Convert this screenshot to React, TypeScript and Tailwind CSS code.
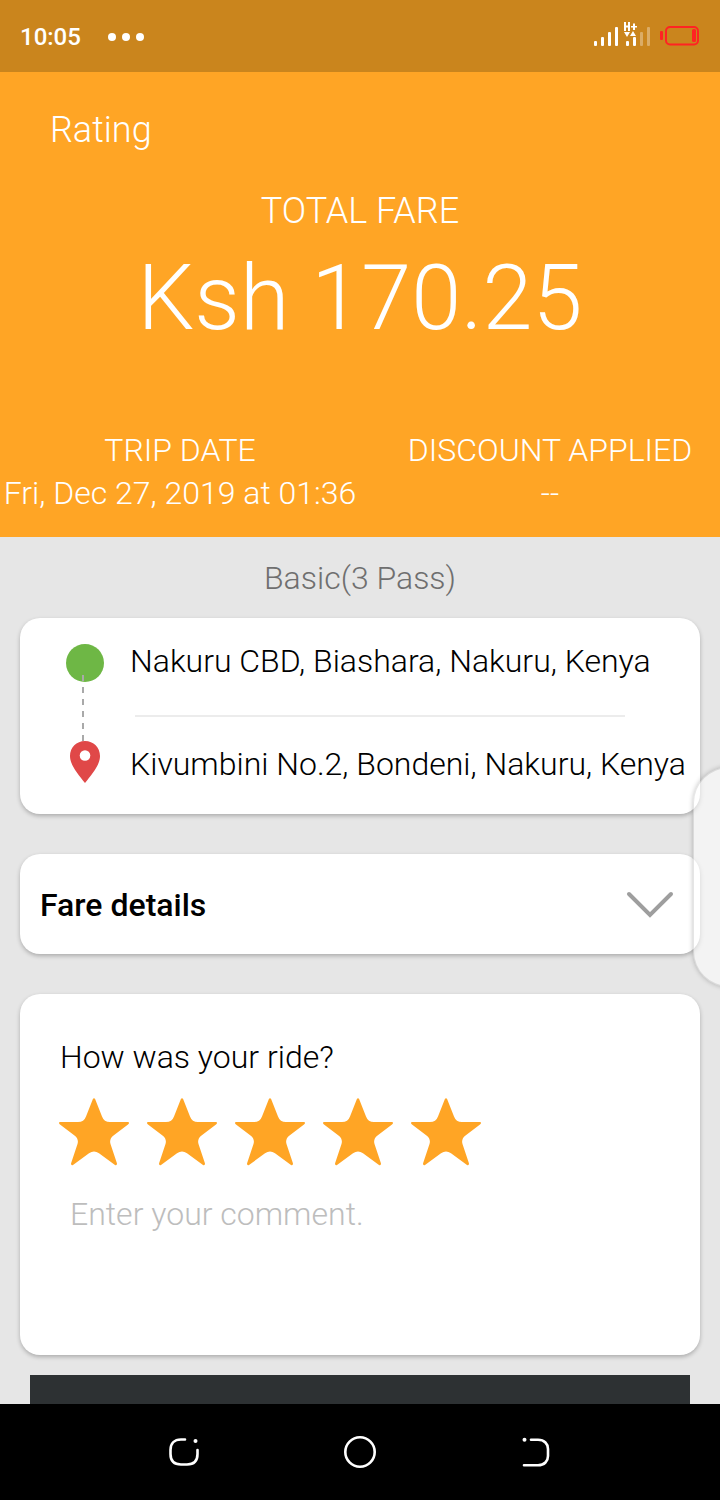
import { useState } from "react";

const STARS = [1, 2, 3, 4, 5];

function StatusBar() {
  return (
    <div className="flex h-[72px] shrink-0 items-center justify-between bg-[#ca851d] pl-5 pr-5 text-white">
      <div className="flex items-center gap-[27px] pt-0.5">
        <span className="text-2xl font-medium">10:05</span>
        <svg className="h-2 w-9" viewBox="0 0 36 8" fill="currentColor" aria-hidden="true">
          <circle cx="4" cy="4" r="4" />
          <circle cx="18" cy="4" r="4" />
          <circle cx="32" cy="4" r="4" />
        </svg>
      </div>
      <svg className="h-7 w-[107px]" viewBox="0 0 107 28" fill="none" aria-hidden="true">
        <g fill="#fff">
          <rect x="1" y="19" width="3" height="5" rx="1" />
          <rect x="8" y="15" width="3" height="9" rx="1" />
          <rect x="15" y="10" width="3" height="14" rx="1" />
          <rect x="22" y="5" width="3" height="19" rx="1" />
          <path d="M31 0h2v3.500h2V0h2v9h-2V5.500h-2V9h-2zM40 1.500h2v2.500h2v1.500h-2V8h-2V5.500h-2V4h2z" />
          <path d="M31 10h6l-3 5zM37 14h6l-3-5z" />
          <rect x="33" y="19" width="3" height="5" rx="1" />
          <rect x="40" y="15" width="3" height="9" rx="1" />
        </g>
        <g fill="#fff" opacity=".32">
          <rect x="47" y="10" width="3" height="14" rx="1" />
          <rect x="54" y="5" width="3" height="19" rx="1" />
        </g>
        <rect x="67" y="9" width="3" height="9" rx="1" fill="#ff2323" />
        <rect x="73" y="5" width="32" height="17.500" rx="4" stroke="#ff2323" strokeWidth="2" />
        <rect x="99" y="7" width="4" height="13" rx="1.500" fill="#ff2323" />
      </svg>
    </div>
  );
}

function Header() {
  return (
    <header className="bg-[#ffa525] pb-[22px] pt-9 text-center text-white">
      <h1 className="px-[50px] text-left text-4xl/[44px] font-light">Rating</h1>
      <p className="mt-[37px] text-4xl/[44px] font-light">TOTAL FARE</p>
      <p className="mt-[14px] text-[90px]/[104px] font-light">Ksh 170.25</p>
      <div className="mt-[78px] grid grid-cols-2 text-[32px]/[43px] font-light whitespace-nowrap">
        <div>
          <p>TRIP DATE</p>
          <p>Fri, Dec 27, 2019 at 01:36</p>
        </div>
        <div className="pl-5">
          <p>DISCOUNT APPLIED</p>
          <p>--</p>
        </div>
      </div>
    </header>
  );
}

function RouteCard() {
  return (
    <section className="flex h-[196px] rounded-[20px] bg-white pl-[45px] shadow-[0_2px_4px_rgba(0,0,0,0.25)]">
      <svg className="mt-[25px] h-[142px] w-10 shrink-0" viewBox="0 0 40 142" aria-hidden="true">
        <circle cx="20" cy="20" r="19" fill="#6eb745" />
        <path d="M18 32V100" stroke="#a9a9a9" strokeWidth="2" strokeDasharray="6 6" />
        <path
          d="M20 98C11.500 98 5 104.500 5 113C5 122 13 131 20 140C27 131 35 122 35 113C35 104.500 28.500 98 20 98Z"
          fill="#e04848"
        />
        <circle cx="20" cy="112.500" r="5.300" fill="#fff" />
      </svg>
      <div className="flex min-w-0 flex-1 flex-col pl-[25px] pt-[23px] text-[32px]/[40px] font-light whitespace-nowrap text-black">
        <p>Nakuru CBD, Biashara, Nakuru, Kenya</p>
        <hr className="mb-[27px] ml-[5px] mr-[75px] mt-[34px] border-0 border-t-2 border-[#ececec]" />
        <p>Kivumbini No.2, Bondeni, Nakuru, Kenya</p>
      </div>
    </section>
  );
}

function ReviewCard() {
  const [rating, setRating] = useState(5);
  return (
    <section className="mt-10 rounded-[20px] bg-white px-10 pb-[21px] pt-[43px] shadow-[0_2px_4px_rgba(0,0,0,0.25)]">
      <fieldset>
        <legend className="text-[32px]/[40px] font-light text-black">How was your ride?</legend>
        <div className="-ml-px mt-[21px] flex gap-[18px]">
          {STARS.map((n) => (
            <label key={n} className="relative cursor-pointer">
              <input
                type="radio"
                name="rating"
                aria-label={`${n} stars`}
                className="peer sr-only"
                checked={rating === n}
                onChange={() => setRating(n)}
              />
              <svg
                className={n <= rating ? "h-[68px] w-[70px] text-[#ffa525]" : "h-[68px] w-[70px] text-[#d8d8d8]"}
                viewBox="0 0 70 68"
                fill="currentColor"
                aria-hidden="true"
              >
                <path d="M34 .8Q35-.4 36 .8L43 18.500Q45 24 51 24H69Q71 24.500 69 26.600L54.500 37.500Q50 41 51.500 46L58 65.500Q58 68 56 67L40 55.300Q35 51.500 30 55.300L14 67Q12 68 12 65.500L18.500 46Q20 41 15.500 37.500L1 26.600Q-1 24.500 1 24H19Q25 24 27 18.500Z" />
              </svg>
            </label>
          ))}
        </div>
      </fieldset>
      <textarea
        aria-label="Comment"
        placeholder="Enter your comment."
        className="mt-7 block h-[140px] w-full resize-none bg-transparent px-[10px] text-[32px]/[40px] font-light text-black outline-none placeholder:text-[#bdbdbd]"
      />
    </section>
  );
}

function NavBar() {
  return (
    <nav className="flex h-24 shrink-0 items-center justify-around bg-black px-24 text-white">
      <button type="button" aria-label="Recent apps">
        <svg className="size-10" viewBox="0 0 40 40" fill="none" stroke="currentColor" strokeWidth="2.600" strokeLinecap="round">
          <path d="M21 7.500H17C10 7.500 6.500 12 6.500 18V22C6.500 29 10.500 32.500 17 32.500H23C29.500 32.500 33.500 29 33.500 22V18" />
          <circle cx="31.500" cy="9" r="2" fill="currentColor" stroke="none" />
        </svg>
      </button>
      <button type="button" aria-label="Home">
        <svg className="size-10" viewBox="0 0 40 40" fill="none" stroke="currentColor" strokeWidth="2.600">
          <circle cx="20" cy="20" r="14.700" />
        </svg>
      </button>
      <button type="button" aria-label="Back">
        <svg className="size-10" viewBox="0 0 40 40" fill="none" stroke="currentColor" strokeWidth="2.600" strokeLinecap="round">
          <path d="M15 7.800H22C28.500 7.800 32 12 32 17V24C32 29 28.500 33.300 22 33.300H8" />
          <circle cx="8.500" cy="7.800" r="2" fill="currentColor" stroke="none" />
        </svg>
      </button>
    </nav>
  );
}

export default function App() {
  const [open, setOpen] = useState(false);
  return (
    <div className="relative flex h-screen flex-col overflow-hidden bg-[#e6e6e6] font-['Roboto',sans-serif]">
      <StatusBar />
      <div className="min-h-0 flex-1 overflow-y-auto [scrollbar-width:none]">
        <Header />
        <main className="px-5 pb-5">
          <p className="pb-5 pt-[21px] text-center text-[32px]/[40px] font-light text-[#6f6f6f]">Basic(3 Pass)</p>
          <RouteCard />
          <button
            type="button"
            aria-expanded={open}
            onClick={() => setOpen(!open)}
            className="mt-10 flex h-[100px] w-full items-center justify-between rounded-[20px] bg-white pl-5 pr-[26px] pt-0.5 text-[32px]/[40px] font-medium text-black shadow-[0_2px_4px_rgba(0,0,0,0.25)]"
          >
            Fare details
            <svg className="h-7 w-12" viewBox="0 0 48 28" fill="none" stroke="#9e9e9e" strokeWidth="4" strokeLinecap="round" aria-hidden="true">
              <path d="M3 3L24 24L45 3" />
            </svg>
          </button>
          <ReviewCard />
          <div className="px-[10px] pt-5">
            <button type="button" aria-label="Submit" className="block h-[100px] w-full bg-[#2d3133]" />
          </div>
        </main>
      </div>
      <NavBar />
      <div className="absolute -right-5 top-[767px] h-[220px] w-[47px] rounded-l-[36px] border border-black/10 bg-white/50 shadow-[0_0_5px_rgba(0,0,0,0.25)]" />
    </div>
  );
}
